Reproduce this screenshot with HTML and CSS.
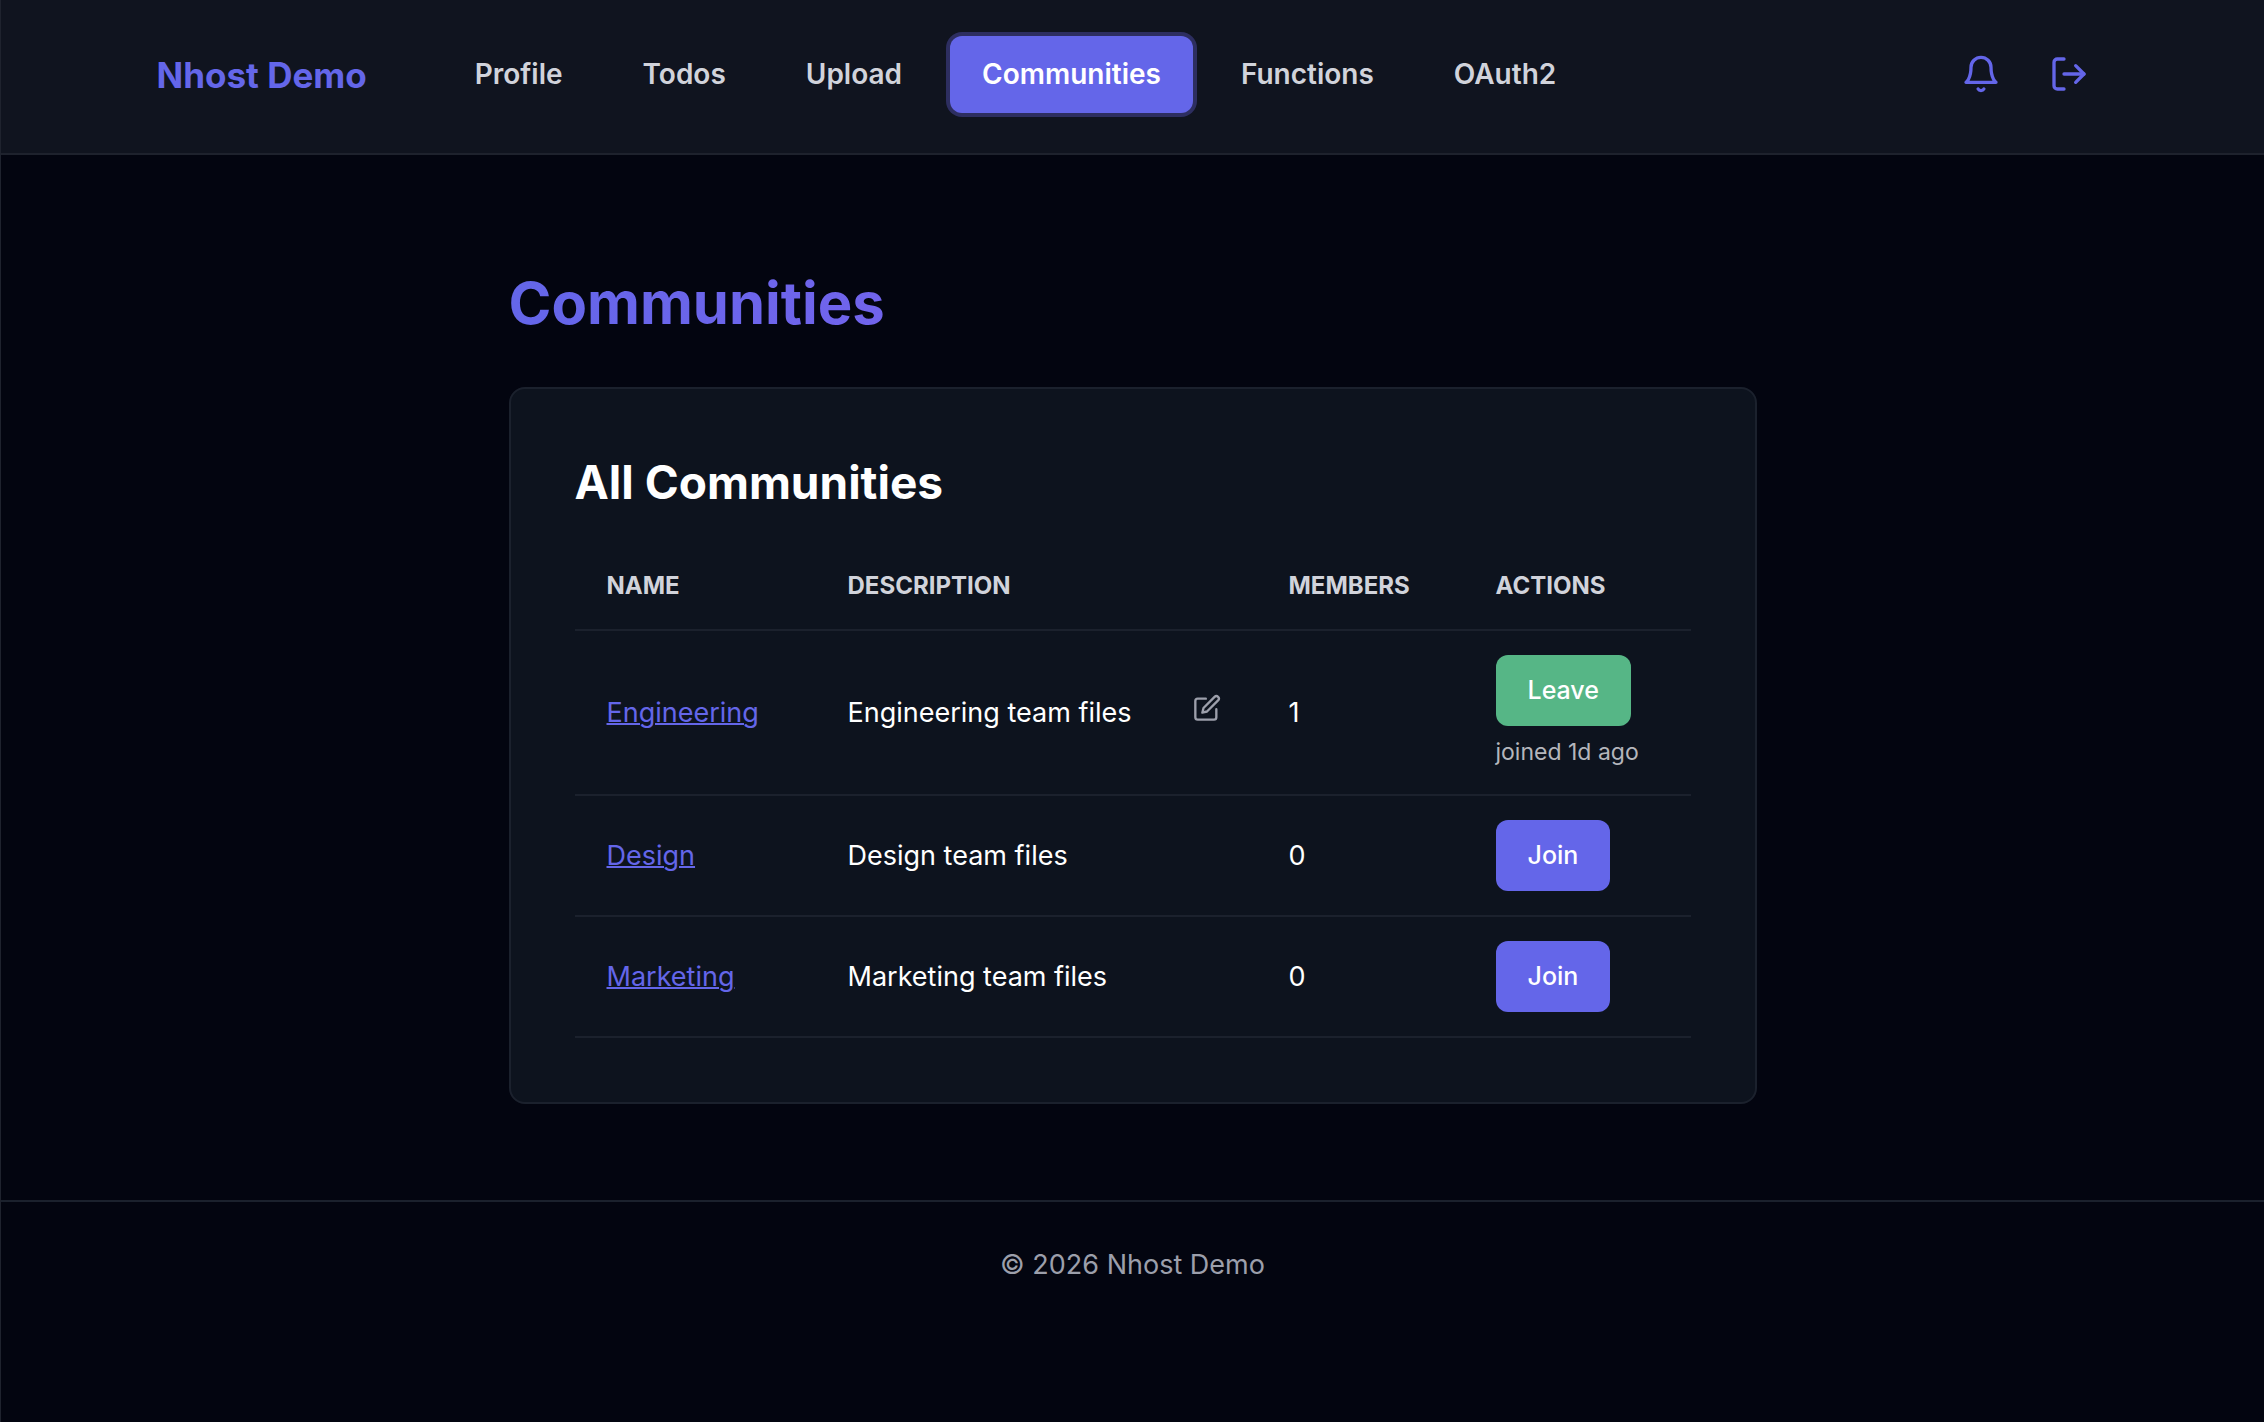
FILE: index.html
```html
<!DOCTYPE html>
<html lang="en">
<head>
<meta charset="utf-8">
<meta name="viewport" content="width=device-width, initial-scale=1">
<title>Communities</title>
<link rel="stylesheet" href="styles.css">
</head>
<body>
<header class="header">
  <div class="header-inner">
    <a class="logo" href="#">Nhost Demo</a>
    <nav class="nav">
      <a class="nav-link" href="#">Profile</a>
      <a class="nav-link" href="#">Todos</a>
      <a class="nav-link" href="#">Upload</a>
      <a class="nav-link active" href="#" aria-current="page">Communities</a>
      <a class="nav-link" href="#">Functions</a>
      <a class="nav-link" href="#">OAuth2</a>
    </nav>
    <div class="header-actions">
      <button class="icon-button" type="button" aria-label="Notifications">
        <svg class="icon" viewBox="0 0 24 24" aria-hidden="true"><path d="M18 8A6 6 0 0 0 6 8c0 7-3 9-3 9h18s-3-2-3-9"/><path d="M13.73 21a2 2 0 0 1-3.46 0"/></svg>
      </button>
      <button class="icon-button" type="button" aria-label="Sign out">
        <svg class="icon" viewBox="0 0 24 24" aria-hidden="true"><path d="M9 21H5a2 2 0 0 1-2-2V5a2 2 0 0 1 2-2h4"/><path d="M16 17l5-5-5-5"/><path d="M21 12H9"/></svg>
      </button>
    </div>
  </div>
</header>
<main class="main">
  <h1 class="page-title">Communities</h1>
  <section class="card">
    <h2 class="card-title">All Communities</h2>
    <table class="table">
      <thead>
        <tr>
          <th class="col-name" scope="col">Name</th>
          <th scope="col">Description</th>
          <th class="col-members" scope="col">Members</th>
          <th class="col-actions" scope="col">Actions</th>
        </tr>
      </thead>
      <tbody>
        <tr>
          <td><a class="link" href="#">Engineering</a></td>
          <td>
            <div class="description">
              <span>Engineering team files</span>
              <button class="edit-button" type="button" aria-label="Edit description">
                <svg class="edit-icon" viewBox="0 0 24 24" aria-hidden="true"><path d="M11 4H4a2 2 0 0 0-2 2v14a2 2 0 0 0 2 2h14a2 2 0 0 0 2-2v-7"/><path d="M18.5 2.5a2.121 2.121 0 0 1 3 3L12 15l-4 1 1-4 9.5-9.5z"/></svg>
              </button>
            </div>
          </td>
          <td>1</td>
          <td>
            <button class="button button-leave" type="button">Leave</button>
            <div class="joined">joined 1d ago</div>
          </td>
        </tr>
        <tr>
          <td><a class="link" href="#">Design</a></td>
          <td>Design team files</td>
          <td>0</td>
          <td><button class="button" type="button">Join</button></td>
        </tr>
        <tr>
          <td><a class="link" href="#">Marketing</a></td>
          <td>Marketing team files</td>
          <td>0</td>
          <td><button class="button" type="button">Join</button></td>
        </tr>
      </tbody>
    </table>
  </section>
</main>
<footer class="footer">© 2026 Nhost Demo</footer>
</body>
</html>
```
FILE: styles.css
```css
:root {
  --bg: #030510;
  --header-bg: #10141f;
  --card-bg: #0d131e;
  --line: #1b212d;
  --primary: #6466e9;
  --success: #56b686;
  --text: #ffffff;
  --text-soft: #d1d3db;
  --text-muted: #9c9fab;
}

* {
  box-sizing: border-box;
}

body {
  margin: 0;
  min-height: 100vh;
  border-left: 1px solid #1f232e;
  background: var(--bg);
  color: var(--text);
  font-family: Inter, "Liberation Sans", sans-serif;
  font-size: 27px;
  line-height: 42px;
}

button {
  border: 0;
  font: inherit;
  cursor: pointer;
}

.header {
  border-bottom: 2px solid #1e222d;
  background: var(--header-bg);
}

.header-inner {
  display: flex;
  align-items: center;
  max-width: 2048px;
  margin: 0 auto;
  padding: 36px 48px 40px;
}

.logo {
  margin-right: 76px;
  color: var(--primary);
  font-size: 35px;
  font-weight: 700;
  text-decoration: none;
}

.nav {
  display: flex;
  gap: 16px;
}

.nav-link {
  padding: 17px 32px 18px;
  border-radius: 12px;
  color: var(--text-soft);
  font-size: 28px;
  font-weight: 600;
  text-decoration: none;
}

.nav-link.active {
  background: var(--primary);
  box-shadow: 0 0 0 4px #2d2e60;
  color: var(--text);
}

.header-actions {
  display: flex;
  gap: 8px;
  margin-left: auto;
}

.icon-button {
  display: flex;
  padding: 16px 20px 17px;
  background: none;
}

.icon {
  width: 40px;
  height: 40px;
  fill: none;
  stroke: var(--primary);
  stroke-width: 2;
  stroke-linecap: round;
  stroke-linejoin: round;
}

.main {
  max-width: 1344px;
  margin: 0 auto;
  padding: 112px 48px 96px;
}

.page-title {
  width: fit-content;
  margin: 0 0 48px;
  background: linear-gradient(90deg, #6466e9, #7164ec);
  background-clip: text;
  color: transparent;
  font-size: 58px;
  font-weight: 700;
  line-height: 72px;
}

.card {
  padding: 64px;
  border: 2px solid var(--line);
  border-radius: 16px;
  background: var(--card-bg);
}

.card-title {
  margin: 0 0 32px;
  font-size: 46px;
  font-weight: 700;
  line-height: 58px;
}

.table {
  width: 100%;
  table-layout: fixed;
  border-collapse: separate;
  border-spacing: 0;
}

.table th,
.table td {
  padding: 24px 32px;
  border-bottom: 2px solid var(--line);
  text-align: left;
  vertical-align: middle;
}

.table th {
  color: var(--text-soft);
  font-size: 24px;
  font-weight: 700;
  line-height: 38px;
  text-transform: uppercase;
}

.col-name {
  width: 241px;
}

.col-members {
  width: 207px;
}

.col-actions {
  width: 227px;
}

.link {
  color: var(--primary);
  text-decoration-thickness: 2px;
}

.description {
  display: flex;
  align-items: flex-start;
  justify-content: space-between;
}

.edit-button {
  display: flex;
  padding: 2px 4px;
  background: none;
}

.edit-icon {
  width: 28px;
  height: 28px;
  fill: none;
  stroke: var(--text-muted);
  stroke-width: 2;
  stroke-linecap: round;
  stroke-linejoin: round;
}

.button {
  display: block;
  padding: 14px 32px 15px;
  border-radius: 12px;
  background: var(--primary);
  color: var(--text);
  font-size: 25px;
  font-weight: 500;
}

.button-leave {
  background: var(--success);
}

.joined {
  margin-top: 8px;
  color: #b4b6bc;
  font-size: 23px;
  line-height: 36px;
  white-space: nowrap;
}

.footer {
  padding: 42px 48px;
  border-top: 2px solid var(--line);
  color: var(--text-muted);
  text-align: center;
}
```
